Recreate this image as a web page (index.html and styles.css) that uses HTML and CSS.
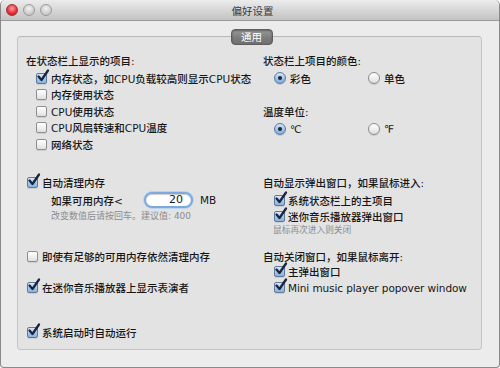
FILE: index.html
```html
<!DOCTYPE html>
<html lang="zh-CN">
<head>
    <meta charset="UTF-8">
    <title>偏好设置</title>
    <link rel="stylesheet" href="styles.css">
</head>
<body>
    <div class="window">
        <div class="titlebar">
            <div class="lights">
                <span class="light close"></span>
                <span class="light"></span>
                <span class="light"></span>
            </div>
            <div class="title">偏好设置</div>
        </div>

        <div class="content">
            <div class="panel">
                <div class="tab">通用</div>

                <div class="section s1">
                    <div class="col">
                        <div class="heading h-left">在状态栏上显示的项目:</div>
                        <div class="row item indent"><span class="cb on"><svg viewBox="0 0 14 14"><path d="M2.5 6.5 L5.5 10 L12 0.5"/></svg></span>内存状态，如CPU负载较高则显示CPU状态</div>
                        <div class="row item indent"><span class="cb"></span>内存使用状态</div>
                        <div class="row item indent"><span class="cb"></span>CPU使用状态</div>
                        <div class="row item indent"><span class="cb"></span>CPU风扇转速和CPU温度</div>
                        <div class="row item indent"><span class="cb"></span>网络状态</div>
                    </div>
                    <div class="col">
                        <div class="heading">状态栏上项目的颜色:</div>
                        <div class="row radios">
                            <div class="radio-opt"><span class="radio on"></span>彩色</div>
                            <div class="radio-opt"><span class="radio"></span>单色</div>
                        </div>
                        <div class="heading h-gap">温度单位:</div>
                        <div class="row radios">
                            <div class="radio-opt"><span class="radio on"></span>℃</div>
                            <div class="radio-opt"><span class="radio"></span>℉</div>
                        </div>
                    </div>
                </div>

                <div class="section s2">
                    <div class="col">
                        <div class="row top"><span class="cb on"><svg viewBox="0 0 14 14"><path d="M2.5 6.5 L5.5 10 L12 0.5"/></svg></span>自动清理内存</div>
                        <div class="row limit">
                            <span class="limit-label">如果可用内存&lt;</span>
                            <span class="field">20</span>
                            <span class="unit">MB</span>
                        </div>
                        <div class="hint hint-left">改变数值后请按回车。建议值: 400</div>
                    </div>
                    <div class="col">
                        <div class="heading">自动显示弹出窗口，如果鼠标进入:</div>
                        <div class="row sub first"><span class="cb on"><svg viewBox="0 0 14 14"><path d="M2.5 6.5 L5.5 10 L12 0.5"/></svg></span>系统状态栏上的主项目</div>
                        <div class="row sub"><span class="cb on"><svg viewBox="0 0 14 14"><path d="M2.5 6.5 L5.5 10 L12 0.5"/></svg></span>迷你音乐播放器弹出窗口</div>
                        <div class="hint hint-right">鼠标再次进入则关闭</div>
                    </div>
                </div>

                <div class="section s3">
                    <div class="col">
                        <div class="row top"><span class="cb"></span>即使有足够的可用内存依然清理内存</div>
                        <div class="row top spaced"><span class="cb on"><svg viewBox="0 0 14 14"><path d="M2.5 6.5 L5.5 10 L12 0.5"/></svg></span>在迷你音乐播放器上显示表演者</div>
                    </div>
                    <div class="col">
                        <div class="heading short">自动关闭窗口，如果鼠标离开:</div>
                        <div class="row sub"><span class="cb on"><svg viewBox="0 0 14 14"><path d="M2.5 6.5 L5.5 10 L12 0.5"/></svg></span>主弹出窗口</div>
                        <div class="row sub"><span class="cb on"><svg viewBox="0 0 14 14"><path d="M2.5 6.5 L5.5 10 L12 0.5"/></svg></span><span class="latin">Mini music player popover window</span></div>
                    </div>
                </div>

                <div class="section s4">
                    <div class="row top"><span class="cb on"><svg viewBox="0 0 14 14"><path d="M2.5 6.5 L5.5 10 L12 0.5"/></svg></span>系统启动时自动运行</div>
                </div>
            </div>
        </div>
    </div>
</body>
</html>
```

FILE: styles.css
```css
:root {
    --text-color: #161616;
    --hint-color: #8c8c8c;
    --window-bg: #ececec;
    --panel-bg: #e3e3e3;
    --panel-border: #c4c4c4;
    --font-family: "DejaVu Sans", "Noto Sans CJK SC", sans-serif;
}

html, body {
    margin: 0;
    padding: 0;
    background: #ffffff;
}

body {
    font-family: var(--font-family);
    font-size: 10.5px;
    font-weight: 500;
    color: var(--text-color);
}

.window {
    width: 500px;
    height: 368px;
    box-sizing: border-box;
    background: var(--window-bg);
    border: 1px solid #8a8a8a;
    border-top: none;
    border-radius: 5px 5px 4px 4px;
    overflow: hidden;
    display: flex;
    flex-direction: column;
}

/* title bar */
.titlebar {
    height: 20px;
    flex: none;
    display: flex;
    align-items: center;
    border-bottom: 1px solid #9c9c9c;
    background: linear-gradient(to bottom, #ececec, #d3d3d3 60%, #c3c3c3);
    border-radius: 5px 5px 0 0;
}

.lights {
    display: flex;
    gap: 5px;
    padding-left: 5px;
    width: 60px;
}

.light {
    width: 10px;
    height: 10px;
    border-radius: 50%;
    border: 1px solid #9a9a9a;
    background: radial-gradient(circle at 50% 35%, #f2f2f2, #c9c9c9 70%, #b5b5b5);
}

.light.close {
    border-color: #a3323a;
    background: radial-gradient(circle at 50% 35%, #ff9a9a, #e0262f 65%, #b3141b);
}

.title {
    flex: 1;
    text-align: center;
    margin-right: 60px;
    color: #3a3a3a;
    font-size: 10.5px;
    font-weight: 400;
}

/* content */
.content {
    flex: 1;
    padding: 15px 17px 0 16px;
}

.panel {
    background: var(--panel-bg);
    border: 1px solid var(--panel-border);
    border-top-color: #b8b8b8;
    border-radius: 4px;
    padding: 0 8px 8px 8px;
    display: flex;
    flex-direction: column;
}

.tab {
    align-self: center;
    margin-top: -8px;
    width: 42px;
    height: 16px;
    box-sizing: border-box;
    border: 1px solid #5e5e5e;
    border-radius: 4px;
    background: linear-gradient(to bottom, #9a9a9a, #7c7c7c 55%, #6f6f6f);
    box-shadow: inset 0 1px 2px rgba(0, 0, 0, 0.35);
    color: #ffffff;
    text-align: center;
    line-height: 14px;
    font-size: 10.5px;
    font-weight: 400;
    margin-left: 4px;
}

.section {
    display: grid;
    grid-template-columns: 237px 1fr;
    align-items: start;
}

.s1 { margin-top: 8px; }
.s2 { margin-top: 22px; }
.s3 { margin-top: 13px; }
.s4 { display: block; margin-top: 29px; }

.col {
    display: flex;
    flex-direction: column;
}

.heading {
    height: 16px;
    line-height: 16px;
    white-space: nowrap;
}

.h-left { height: 17px; }
.h-gap { margin-top: 18px; }
.heading.short { height: 15px; }

.row {
    display: flex;
    align-items: center;
    gap: 4px;
    height: 16px;
    white-space: nowrap;
}

.row.item { height: 16.5px; }
.indent { padding-left: 10px; }
.top { padding-left: 1px; }
.top.spaced { margin-top: 15px; }
.sub { padding-left: 11px; gap: 3px; }
.sub.first { margin-top: 2px; }

.latin {
    letter-spacing: -0.1px;
}

/* radios */
.radios {
    margin-top: 1px;
    padding-left: 11px;
    gap: 0;
}

.radio-opt {
    display: flex;
    align-items: center;
    gap: 4px;
    width: 94px;
}

.radio {
    width: 12px;
    height: 12px;
    box-sizing: border-box;
    border-radius: 50%;
    border: 1px solid #8c8c8c;
    background: linear-gradient(to bottom, #ffffff, #ececec 60%, #dcdcdc);
    box-shadow: 0 1px 1px rgba(0, 0, 0, 0.12);
    display: flex;
    align-items: center;
    justify-content: center;
}

.radio.on {
    border-color: #5a789e;
    background: linear-gradient(to bottom, #d6e6f7, #9fc2e8 55%, #7fadde);
}

.radio.on::after {
    content: "";
    width: 4px;
    height: 4px;
    border-radius: 50%;
    background: #1d2535;
}

/* checkboxes */
.cb {
    position: relative;
    flex: none;
    width: 11px;
    height: 11px;
    box-sizing: border-box;
    border: 1px solid #8e8e8e;
    border-radius: 2px;
    background: linear-gradient(to bottom, #ffffff, #eeeeee 60%, #dedede);
    box-shadow: 0 1px 1px rgba(0, 0, 0, 0.1);
}

.cb.on {
    border-color: #62799a;
    background: linear-gradient(to bottom, #dbe9f8, #a6c7ea 55%, #87b2e0);
}

.cb svg {
    position: absolute;
    left: -1px;
    top: -4px;
    width: 14px;
    height: 14px;
    overflow: visible;
}

.cb svg path {
    fill: none;
    stroke: #1a2540;
    stroke-width: 2.3;
    stroke-linecap: round;
    stroke-linejoin: round;
}

/* memory limit field */
.limit {
    height: 17px;
    margin-top: 1px;
    padding-left: 25px;
    gap: 0;
}

.limit-label {
    width: 93px;
}

.field {
    width: 49px;
    height: 16px;
    box-sizing: border-box;
    border: 2px solid #7ea9dd;
    border-radius: 8px;
    background: #ffffff;
    box-shadow: 0 0 0 1px #bcd3ee, inset 0 1px 1px rgba(0, 0, 0, 0.2);
    text-align: right;
    padding-right: 8px;
    line-height: 12px;
    font-size: 11px;
}

.unit {
    margin-left: 7px;
}

.hint {
    color: var(--hint-color);
    white-space: nowrap;
    font-weight: 400;
}

.hint-left {
    font-size: 9px;
    height: 12px;
    line-height: 12px;
    margin-top: 1px;
    padding-left: 25px;
}

.hint-right {
    font-size: 8.7px;
    height: 11px;
    line-height: 11px;
    padding-left: 10px;
}
```
